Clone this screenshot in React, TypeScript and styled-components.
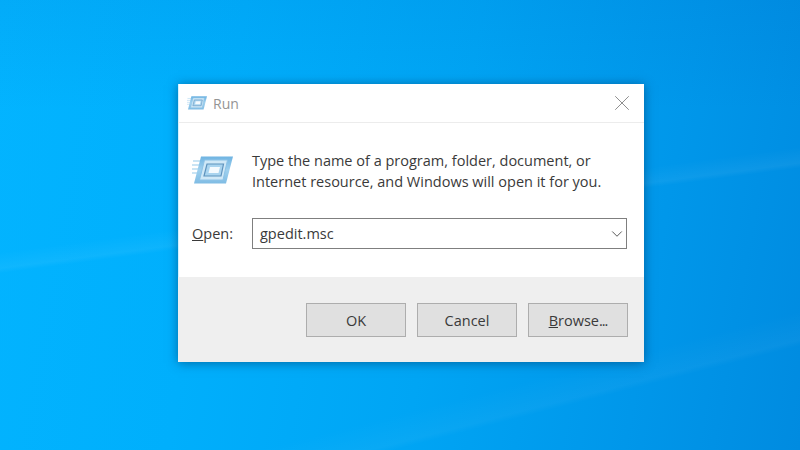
import React from 'react';
import styled, { createGlobalStyle } from 'styled-components';
import { ChevronDown, X } from 'lucide-react';

const GlobalStyle = createGlobalStyle`
  html,
  body {
    margin: 0;
    padding: 0;
    width: 800px;
    height: 450px;
    overflow: hidden;
  }
`;

const Desktop = styled.div`
  width: 800px;
  height: 450px;
  overflow: hidden;
  box-sizing: border-box;
  padding: 84px 156px 88px 178px;
  font-family: 'Open Sans', 'Noto Sans', sans-serif;
  background:
    linear-gradient(172.5deg, transparent 250px, rgba(255, 255, 255, 0.05) 266px, transparent 271px),
    linear-gradient(165.6deg, transparent 500px, rgba(255, 255, 255, 0.035) 528px, transparent 534px),
    linear-gradient(180deg, rgba(0, 70, 170, 0.08) 0, transparent 110px),
    linear-gradient(100deg, #03b4ff 0%, #00affc 28%, #00a5f4 55%, #0097ea 80%, #008be0 100%);
`;

const Window = styled.div`
  display: flex;
  flex-direction: column;
  width: 466px;
  height: 278px;
  background: #fff;
  color: #3a3a3a;
  box-shadow:
    inset 1px 0 0 #d4f1ff,
    inset 0 -1px 0 #cfeaf8,
    0 1px 10px rgba(0, 40, 80, 0.5);
`;

const TitleBar = styled.header`
  display: flex;
  align-items: center;
  gap: 6px;
  flex: 0 0 39px;
  box-sizing: border-box;
  padding: 0 9px 0 9px;
  border-bottom: 1px solid #ececec;
`;

const TitleText = styled.span`
  flex: 1;
  font-size: 14px;
  color: #949494;
`;

const Body = styled.main`
  flex: 1;
  box-sizing: border-box;
  padding: 27px 17px 0 14px;
`;

const Message = styled.div`
  display: grid;
  grid-template-columns: 60px 1fr;
  align-items: start;
`;

const MessageText = styled.p`
  margin: 0;
  font-size: 14.5px;
  line-height: 21px;
  color: #3a3a3a;
`;

const IconSlot = styled.div`
  padding-top: 6px;
`;

const OpenRow = styled.div`
  display: grid;
  grid-template-columns: 60px 375px;
  align-items: center;
  margin-top: 26px;
`;

const OpenLabel = styled.label`
  font-size: 14.5px;
  color: #3a3a3a;
`;

const Combo = styled.div`
  display: flex;
  align-items: center;
  justify-content: space-between;
  height: 31px;
  box-sizing: border-box;
  padding: 0 0 0 7px;
  border: 1px solid #7f7f7f;
  font-size: 14.5px;
  color: #3a3a3a;
`;

const Footer = styled.footer`
  display: flex;
  justify-content: flex-end;
  align-items: flex-start;
  gap: 11px;
  flex: 0 0 85px;
  box-sizing: border-box;
  padding: 26px 16px 0 0;
  background: #efefef;
`;

const Button = styled.button`
  width: 100px;
  height: 34px;
  padding: 0;
  background: #e0e0e0;
  border: 1px solid #adadad;
  font-family: inherit;
  font-size: 14.5px;
  color: #3a3a3a;
`;

const Dots = styled.span`
  letter-spacing: -1px;
`;

const RunIcon = ({ id, width }: { id: string; width: number }) => (
  <svg width={width} height={(width * 28) / 41} viewBox="0 0 41 28" fill="none">
    <defs>
      <linearGradient id={id} x1="0" y1="0" x2="0" y2="1">
        <stop offset="0" stopColor="#6fb4e2" />
        <stop offset="0.5" stopColor="#9fd0ee" />
        <stop offset="1" stopColor="#7fbce4" />
      </linearGradient>
    </defs>
    <path d="M1 5H9M0 9H8M0 13H7M0 17H6" stroke="#b9dcf1" strokeWidth="1.4" />
    <path d="M9 0.5H41L34 27.5H2Z" fill={`url(#${id})`} />
    <path d="M12.5 4H35.5L31 24H7.5Z" fill="#cfe8f7" stroke="#8cc2e6" />
    <path d="M15 8H31.5L29 20H12Z" fill="#a9d4ef" stroke="#5f93bd" strokeWidth="1.2" />
    <path d="M18 11H28L26.5 17H16.5Z" fill="#f4fafe" />
  </svg>
);

export default function App() {
  return (
    <Desktop>
      <GlobalStyle />
      <Window>
        <TitleBar>
          <RunIcon id="run-small" width={20} />
          <TitleText>Run</TitleText>
          <X size={26} strokeWidth={0.9} color="#8c8c8c" />
        </TitleBar>
        <Body>
          <Message>
            <IconSlot>
              <RunIcon id="run-large" width={41} />
            </IconSlot>
            <MessageText>
              Type the name of a program, folder, document, or
              <br />
              Internet resource, and Windows will open it for you.
            </MessageText>
          </Message>
          <OpenRow>
            <OpenLabel>
              <u>O</u>pen:
            </OpenLabel>
            <Combo>
              gpedit.msc
              <ChevronDown size={18} strokeWidth={1.3} color="#555" />
            </Combo>
          </OpenRow>
        </Body>
        <Footer>
          <Button>OK</Button>
          <Button>Cancel</Button>
          <Button>
            <u>B</u>rowse<Dots>...</Dots>
          </Button>
        </Footer>
      </Window>
    </Desktop>
  );
}
